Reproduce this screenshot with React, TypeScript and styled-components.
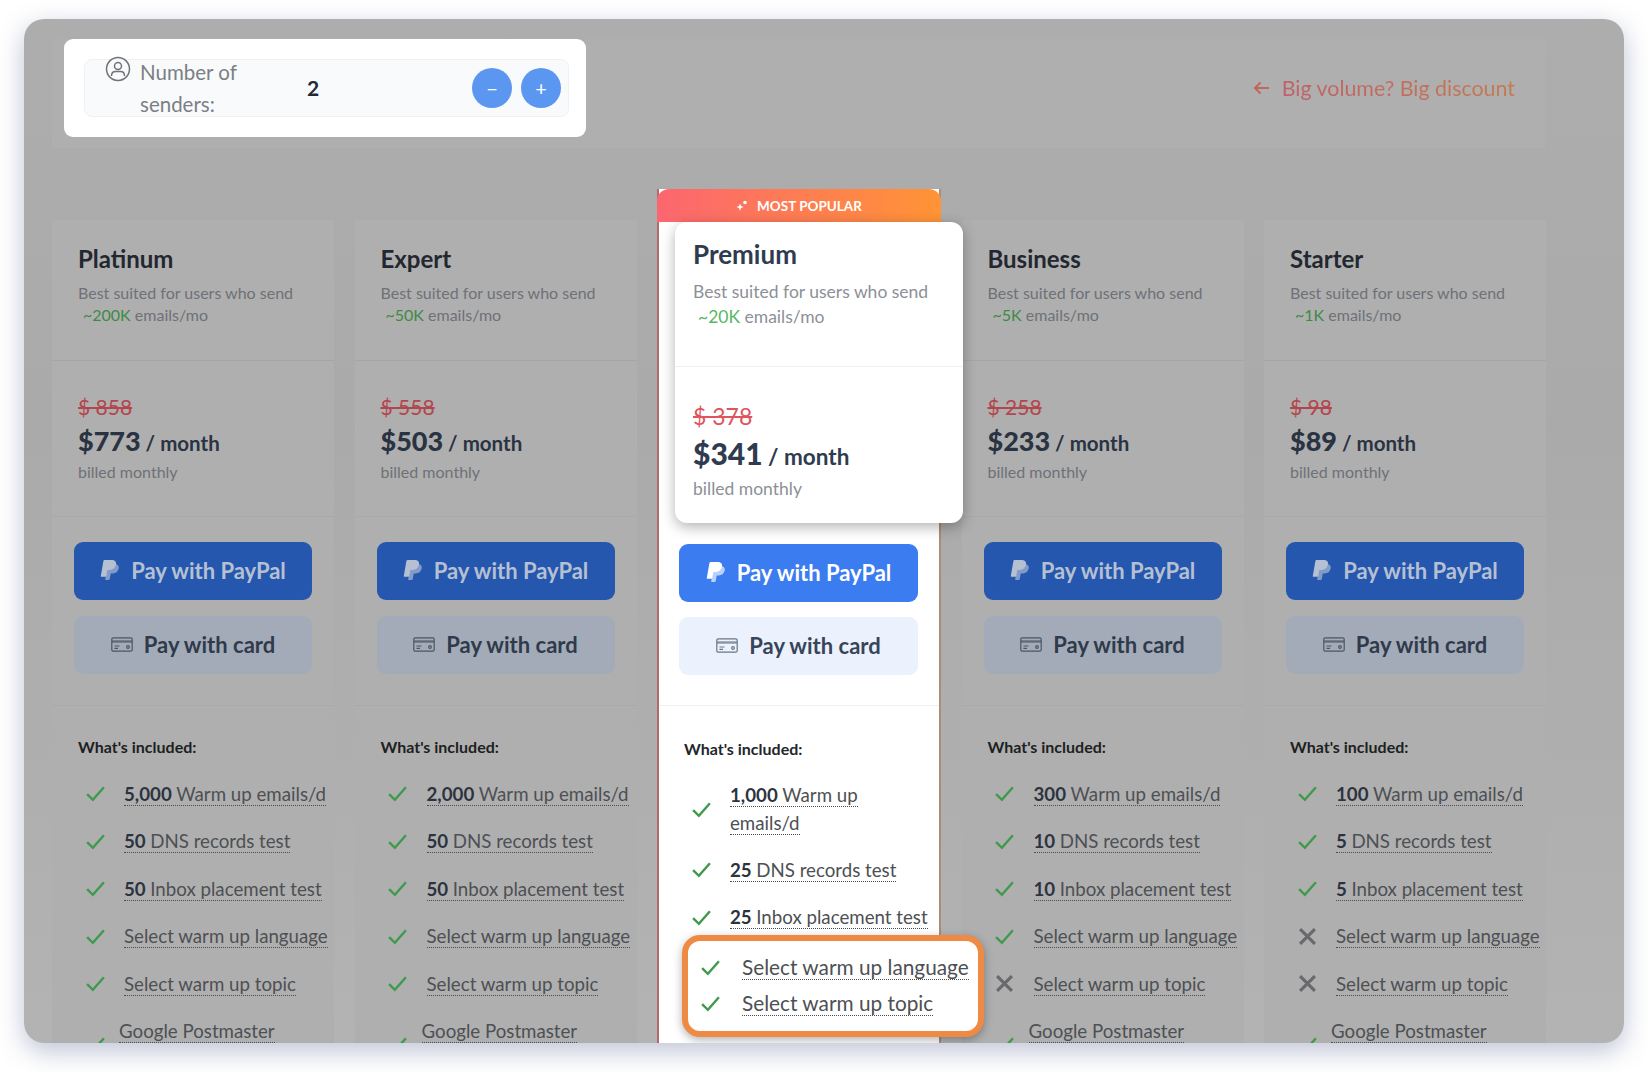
import React from 'react';
import styled, { createGlobalStyle } from 'styled-components';

type Feature = { count?: string; label: string; on: boolean };
type Plan = { name: string; volume: string; old: string; price: string; features: Feature[] };

const makeFeatures = (warm: string, tests: string, language: boolean, topic: boolean): Feature[] => [
    { count: warm, label: 'Warm up emails/d', on: true },
    { count: tests, label: 'DNS records test', on: true },
    { count: tests, label: 'Inbox placement test', on: true },
    { label: 'Select warm up language', on: language },
    { label: 'Select warm up topic', on: topic },
];

const leftPlans: Plan[] = [
    { name: 'Platinum', volume: '~200K', old: '$ 858', price: '$773', features: makeFeatures('5,000', '50', true, true) },
    { name: 'Expert', volume: '~50K', old: '$ 558', price: '$503', features: makeFeatures('2,000', '50', true, true) },
];

const rightPlans: Plan[] = [
    { name: 'Business', volume: '~5K', old: '$ 258', price: '$233', features: makeFeatures('300', '10', true, false) },
    { name: 'Starter', volume: '~1K', old: '$ 98', price: '$89', features: makeFeatures('100', '5', false, false) },
];

const PayPalIcon = () => (
    <svg width="20" height="22" viewBox="0 0 20 22" fill="currentColor">
        <path opacity="0.65" d="M7 5h7.5c3 0 4.8 1.8 4.2 4.6-.7 3.2-3 4.9-6 4.9h-2l-.9 5.6c-.1.5-.4.8-.9.8H5.2z" />
        <path d="M4.6 1h7c3.2 0 5 1.7 4.4 4.6-.7 3.5-3.100 5.300-6.400 5.300H7.300l-1 6.100c-.1.500-.4.800-.9.800H1.500c-.5 0-.8-.4-.7-.9L3.400 2c.1-.6.600-1 1.200-1z" />
    </svg>
);

const CardIcon = () => (
    <svg width="22" height="15" viewBox="0 0 22 15" fill="none" stroke="currentColor" strokeWidth="1.2">
        <rect x="0.8" y="0.8" width="20.400" height="13.400" rx="1.500" />
        <path d="M1 4.500h20" strokeWidth="2.400" opacity="0.75" />
        <path d="M3.500 9h5M3.500 11.300h3.500" />
        <circle cx="17" cy="10" r="1.300" />
    </svg>
);

const Check = () => (
    <svg width="21" height="17" viewBox="0 0 20 16" fill="none" stroke="#3f9a4c" strokeWidth="2.300">
        <path d="M2 8.500l5.500 5.500L18 2" />
    </svg>
);

const Cross = () => (
    <svg width="19" height="19" viewBox="0 0 18 18" fill="none" stroke="#686a6d" strokeWidth="3">
        <path d="M2 2l14 14M16 2L2 16" />
    </svg>
);

const UserIcon = () => (
    <svg width="26" height="26" viewBox="0 0 26 26" fill="none" stroke="#6f7276" strokeWidth="1.500">
        <circle cx="13" cy="13" r="11.500" />
        <circle cx="13" cy="10" r="3.500" />
        <path d="M6.500 20c0-3 2-4.500 4-4.500h5c2 0 4 1.500 4 4.500" />
    </svg>
);

const Sparkle = () => (
    <svg width="12" height="12" viewBox="0 0 12 12" fill="#fff">
        <path d="M4 3.500l1 2.500 2.500 1-2.500 1-1 3-1-3-2.500-1 2.500-1z" />
        <circle cx="9" cy="2.500" r="1.800" />
    </svg>
);

const BackArrow = () => (
    <svg width="17" height="14" viewBox="0 0 17 14" fill="none" stroke="#c0665a" strokeWidth="2">
        <path d="M16 7H2M7.500 1.500L2 7l5.500 5.500" />
    </svg>
);

const FeatureRow = ({ feature }: { feature: Feature }) => (
    <Row>
        <Mark>{feature.on ? <Check /> : <Cross />}</Mark>
        <RowLabel>
            <Dotted>
                {feature.count && <b>{feature.count} </b>}
                {feature.label}
            </Dotted>
        </RowLabel>
    </Row>
);

const PlanColumn = ({ plan }: { plan: Plan }) => (
    <Column>
        <Header>
            <PlanName>{plan.name}</PlanName>
            <Suited>
                Best suited for users who send
                <br />
                <Volume>{plan.volume}</Volume> emails/mo
            </Suited>
        </Header>
        <Pricing>
            <OldPrice>{plan.old}</OldPrice>
            <Price>
                <strong>{plan.price}</strong> / month
            </Price>
            <Billed>billed monthly</Billed>
        </Pricing>
        <Actions>
            <PayPalButton><PayPalIcon />Pay with PayPal</PayPalButton>
            <CardButton><CardIcon />Pay with card</CardButton>
        </Actions>
        <Included>
            <IncludedTitle>What's included:</IncludedTitle>
            {plan.features.map((feature) => (
                <FeatureRow key={feature.label} feature={feature} />
            ))}
            <TallRow>
                <Mark><Check /></Mark>
                <WrappedLabel><Dotted>Google Postmaster Tools</Dotted></WrappedLabel>
            </TallRow>
        </Included>
    </Column>
);

const App = (): JSX.Element => {
    return (
        <>
            <GlobalStyle />
            <Frame>
                <TopBar>
                    <SenderCard>
                        <SenderRow>
                            <SenderLabel>
                                <UserIcon />
                                <span>Number of senders:</span>
                            </SenderLabel>
                            <SenderValue>2</SenderValue>
                            <RoundButton>−</RoundButton>
                            <RoundButton>+</RoundButton>
                        </SenderRow>
                    </SenderCard>
                    <Discount>
                        <BackArrow />
                        <DiscountText>Big volume? Big discount</DiscountText>
                    </Discount>
                </TopBar>

                <Plans>
                    {leftPlans.map((plan) => (
                        <PlanColumn key={plan.name} plan={plan} />
                    ))}

                    <PopularColumn>
                        <PopularTab><Sparkle />MOST POPULAR</PopularTab>
                        <Spotlight>
                            <SpotlightHeader>
                                <SpotlightName>Premium</SpotlightName>
                                <SpotlightSuited>
                                    Best suited for users who send
                                    <br />
                                    <SpotlightVolume>~20K</SpotlightVolume> emails/mo
                                </SpotlightSuited>
                            </SpotlightHeader>
                            <SpotlightPricing>
                                <SpotlightOld>$ 378</SpotlightOld>
                                <SpotlightPrice>
                                    <strong>$341</strong> / month
                                </SpotlightPrice>
                                <SpotlightBilled>billed monthly</SpotlightBilled>
                            </SpotlightPricing>
                        </Spotlight>
                        <PopularActions>
                            <BrightPayPal><PayPalIcon />Pay with PayPal</BrightPayPal>
                            <BrightCard><CardIcon />Pay with card</BrightCard>
                        </PopularActions>
                        <PopularIncluded>
                            <PopularTitle>What's included:</PopularTitle>
                            <TallRow>
                                <Mark><Check /></Mark>
                                <RowLabel><Dotted><b>1,000 </b>Warm up<br />emails/d</Dotted></RowLabel>
                            </TallRow>
                            <FeatureRow feature={{ count: '25', label: 'DNS records test', on: true }} />
                            <FeatureRow feature={{ count: '25', label: 'Inbox placement test', on: true }} />
                            <Highlight>
                                <HighlightRow>
                                    <Check />
                                    <HighlightLabel><Dotted>Select warm up language</Dotted></HighlightLabel>
                                </HighlightRow>
                                <HighlightRow>
                                    <Check />
                                    <HighlightLabel><Dotted>Select warm up topic</Dotted></HighlightLabel>
                                </HighlightRow>
                            </Highlight>
                        </PopularIncluded>
                    </PopularColumn>

                    {rightPlans.map((plan) => (
                        <PlanColumn key={plan.name} plan={plan} />
                    ))}
                </Plans>
            </Frame>
        </>
    );
};

const GlobalStyle = createGlobalStyle`
    html, body {
        margin: 0;
        background: #ffffff;
        overflow: hidden;
    }

    body {
        padding: 19px 24px 29px;
        font-family: "Lato", "Noto Sans", sans-serif;
    }

    * {
        box-sizing: border-box;
    }
`;

const Frame = styled.div`
    width: 1600px;
    height: 1024px;
    padding: 20px 79px 0 28px;
    overflow: hidden;
    border-radius: 20px;
    background: linear-gradient(#adadad, #aaaaaa 40%, #b3b3b3);
    box-shadow: 0 8px 26px rgba(96, 104, 150, 0.4);
`;

const TopBar = styled.div`
    display: flex;
    justify-content: space-between;
    align-items: flex-start;
    height: 109px;
    padding-left: 12px;
    padding-right: 30px;
    background: #afafaf;
`;

const SenderCard = styled.div`
    width: 522px;
    height: 98px;
    padding: 20px 16px 20px 20px;
    border-radius: 9px;
    background: #ffffff;
`;

const SenderRow = styled.div`
    display: flex;
    align-items: center;
    gap: 9px;
    width: 485px;
    height: 58px;
    padding-right: 7px;
    border: 1px solid #f0f1f3;
    border-radius: 8px;
    background: #f9fafb;
`;

const SenderLabel = styled.div`
    display: flex;
    align-items: flex-start;
    gap: 9px;
    width: 213px;
    padding-left: 20px;
    font-size: 20.500px;
    line-height: 32px;
    color: #7b7f85;

    svg {
        flex-shrink: 0;
        margin-top: -1px;
    }

    span {
        width: 130px;
        margin-top: -1px;
    }
`;

const SenderValue = styled.div`
    flex: 1;
    padding-bottom: 1px;
    font-size: 21px;
    font-weight: 700;
    color: #1f2937;
`;

const RoundButton = styled.div`
    display: flex;
    align-items: center;
    justify-content: center;
    width: 40px;
    height: 40px;
    border-radius: 50%;
    background: #5b97f1;
    font-size: 20px;
    color: #ffffff;
`;

const Discount = styled.div`
    display: flex;
    align-items: center;
    gap: 12px;
    height: 98px;
`;

const DiscountText = styled.span`
    font-size: 21.400px;
    background: linear-gradient(90deg, #c0606a, #c27b50);
    -webkit-background-clip: text;
    background-clip: text;
    color: transparent;
`;

const Plans = styled.div`
    display: grid;
    grid-template-columns: 282px 282px 284px 282px 282px;
    column-gap: 20.500px;
    margin-top: 41px;
`;

const Column = styled.div`
    margin-top: 31px;
    background: #afafaf;
`;

const Header = styled.div`
    height: 141px;
    padding: 24px 26px 0;
    border-bottom: 1px solid #a6a6a6;
`;

const PlanName = styled.div`
    font-size: 24px;
    font-weight: 700;
    line-height: 30px;
    color: #23272f;
`;

const Suited = styled.div`
    margin-top: 8px;
    font-size: 16px;
    line-height: 22px;
    color: #6e7177;
`;

const Volume = styled.span`
    margin-left: 5px;
    color: #3d8a46;
`;

const Pricing = styled.div`
    height: 156px;
    padding: 33px 26px 0;
    border-bottom: 1px solid #a9a9a9;
`;

const OldPrice = styled.div`
    font-size: 21px;
    line-height: 26px;
    text-decoration: line-through;
    color: #b3464c;
`;

const Price = styled.div`
    margin-top: 3px;
    font-size: 20.500px;
    font-weight: 700;
    line-height: 36px;
    color: #2a3342;

    strong {
        font-size: 27px;
    }
`;

const Billed = styled.div`
    font-size: 16px;
    line-height: 21px;
    color: #6e7177;
`;

const Actions = styled.div`
    display: flex;
    flex-direction: column;
    gap: 16px;
    height: 189px;
    padding: 25px 22px 0 22px;
    border-bottom: 1px solid #a9a9a9;
`;

const ButtonBase = styled.div`
    display: flex;
    align-items: center;
    justify-content: center;
    gap: 11px;
    height: 58px;
    padding-bottom: 2px;
    border-radius: 9px;
    font-size: 22px;
    font-weight: 700;
`;

const PayPalButton = styled(ButtonBase)`
    background: #2557ae;
    color: #b6c0d3;
`;

const CardButton = styled(ButtonBase)`
    background: #a4abb8;
    color: #2f3a4b;

    svg {
        color: #4b5563;
    }
`;

const Included = styled.div`
    padding: 29px 0 0 26px;
`;

const IncludedTitle = styled.div`
    margin-bottom: 11px;
    font-size: 16px;
    font-weight: 700;
    line-height: 24px;
    color: #1d1f22;
`;

const Row = styled.div`
    display: flex;
    align-items: center;
    height: 47.500px;
`;

const TallRow = styled(Row)`
    height: 74px;
`;

const Mark = styled.div`
    display: flex;
    justify-content: center;
    flex-shrink: 0;
    width: 34px;
    margin-right: 12px;
`;

const RowLabel = styled.div`
    flex-shrink: 0;
    font-size: 18.700px;
    line-height: 28px;
    white-space: nowrap;
    color: #4d5054;

    b {
        font-weight: 700;
        color: #2c3340;
    }
`;

const WrappedLabel = styled(RowLabel)`
    width: 170px;
    margin-left: -5px;
    white-space: normal;
`;

const Dotted = styled.span`
    border-bottom: 1.500px dotted #4a4d52;
`;

const PopularColumn = styled.div`
    position: relative;
    z-index: 1;
    border-left: 2px solid #b56a6a;
    border-right: 2px solid #ab8c74;
    background: #ffffff;
`;

const PopularTab = styled.div`
    display: flex;
    align-items: center;
    justify-content: center;
    gap: 9px;
    height: 33px;
    margin: 0 -2px;
    border-radius: 12px 12px 0 0;
    background: linear-gradient(90deg, #fc6670, #ff9435);
    font-size: 13.500px;
    font-weight: 700;
    color: #ffffff;
`;

const Spotlight = styled.div`
    position: relative;
    z-index: 2;
    width: 288px;
    height: 301px;
    margin-left: 16px;
    border-radius: 12px;
    background: #ffffff;
    box-shadow: 0 4px 14px rgba(0, 0, 0, 0.3);
`;

const SpotlightHeader = styled.div`
    height: 145px;
    padding: 16px 18px 0;
    border-bottom: 1px solid #eeeff1;
`;

const SpotlightName = styled.div`
    font-size: 26px;
    font-weight: 700;
    line-height: 32px;
    color: #2f3b4e;
`;

const SpotlightSuited = styled.div`
    margin-top: 9px;
    font-size: 17.500px;
    line-height: 25px;
    color: #8c9097;
`;

const SpotlightVolume = styled.span`
    margin-left: 5px;
    color: #59b765;
`;

const SpotlightPricing = styled.div`
    padding: 35px 18px 0;
`;

const SpotlightOld = styled.div`
    font-size: 23px;
    line-height: 28px;
    text-decoration: line-through;
    color: #e0555d;
`;

const SpotlightPrice = styled.div`
    margin-top: 3px;
    font-size: 22.500px;
    font-weight: 700;
    line-height: 40px;
    color: #2f3b4e;

    strong {
        font-size: 30px;
    }
`;

const SpotlightBilled = styled.div`
    font-size: 17.500px;
    line-height: 24px;
    color: #8c9097;
`;

const PopularActions = styled(Actions)`
    height: 183px;
    padding: 21px 21px 0 20px;
    gap: 15px;
    border-bottom: 1px solid #eeeff1;
`;

const BrightPayPal = styled(ButtonBase)`
    background: #3b7cf0;
    color: #ffffff;
`;

const BrightCard = styled(ButtonBase)`
    background: #ebf2fd;
    color: #37445a;

    svg {
        color: #6b7685;
    }
`;

const PopularIncluded = styled(Included)`
    padding: 31px 0 0 25px;
`;

const PopularTitle = styled(IncludedTitle)`
    color: #23262b;
`;

const Highlight = styled.div`
    position: relative;
    z-index: 2;
    width: 302px;
    height: 102px;
    margin: -6px 0 0 -2px;
    padding: 8px 0 0 12px;
    border: 6px solid #ee8a43;
    border-radius: 18px;
    background: #ffffff;
    box-shadow: 0 3px 10px rgba(0, 0, 0, 0.3);
`;

const HighlightRow = styled.div`
    display: flex;
    align-items: center;
    gap: 21px;
    height: 36px;
`;

const HighlightLabel = styled(RowLabel)`
    font-size: 20.800px;
`;

export default App;
